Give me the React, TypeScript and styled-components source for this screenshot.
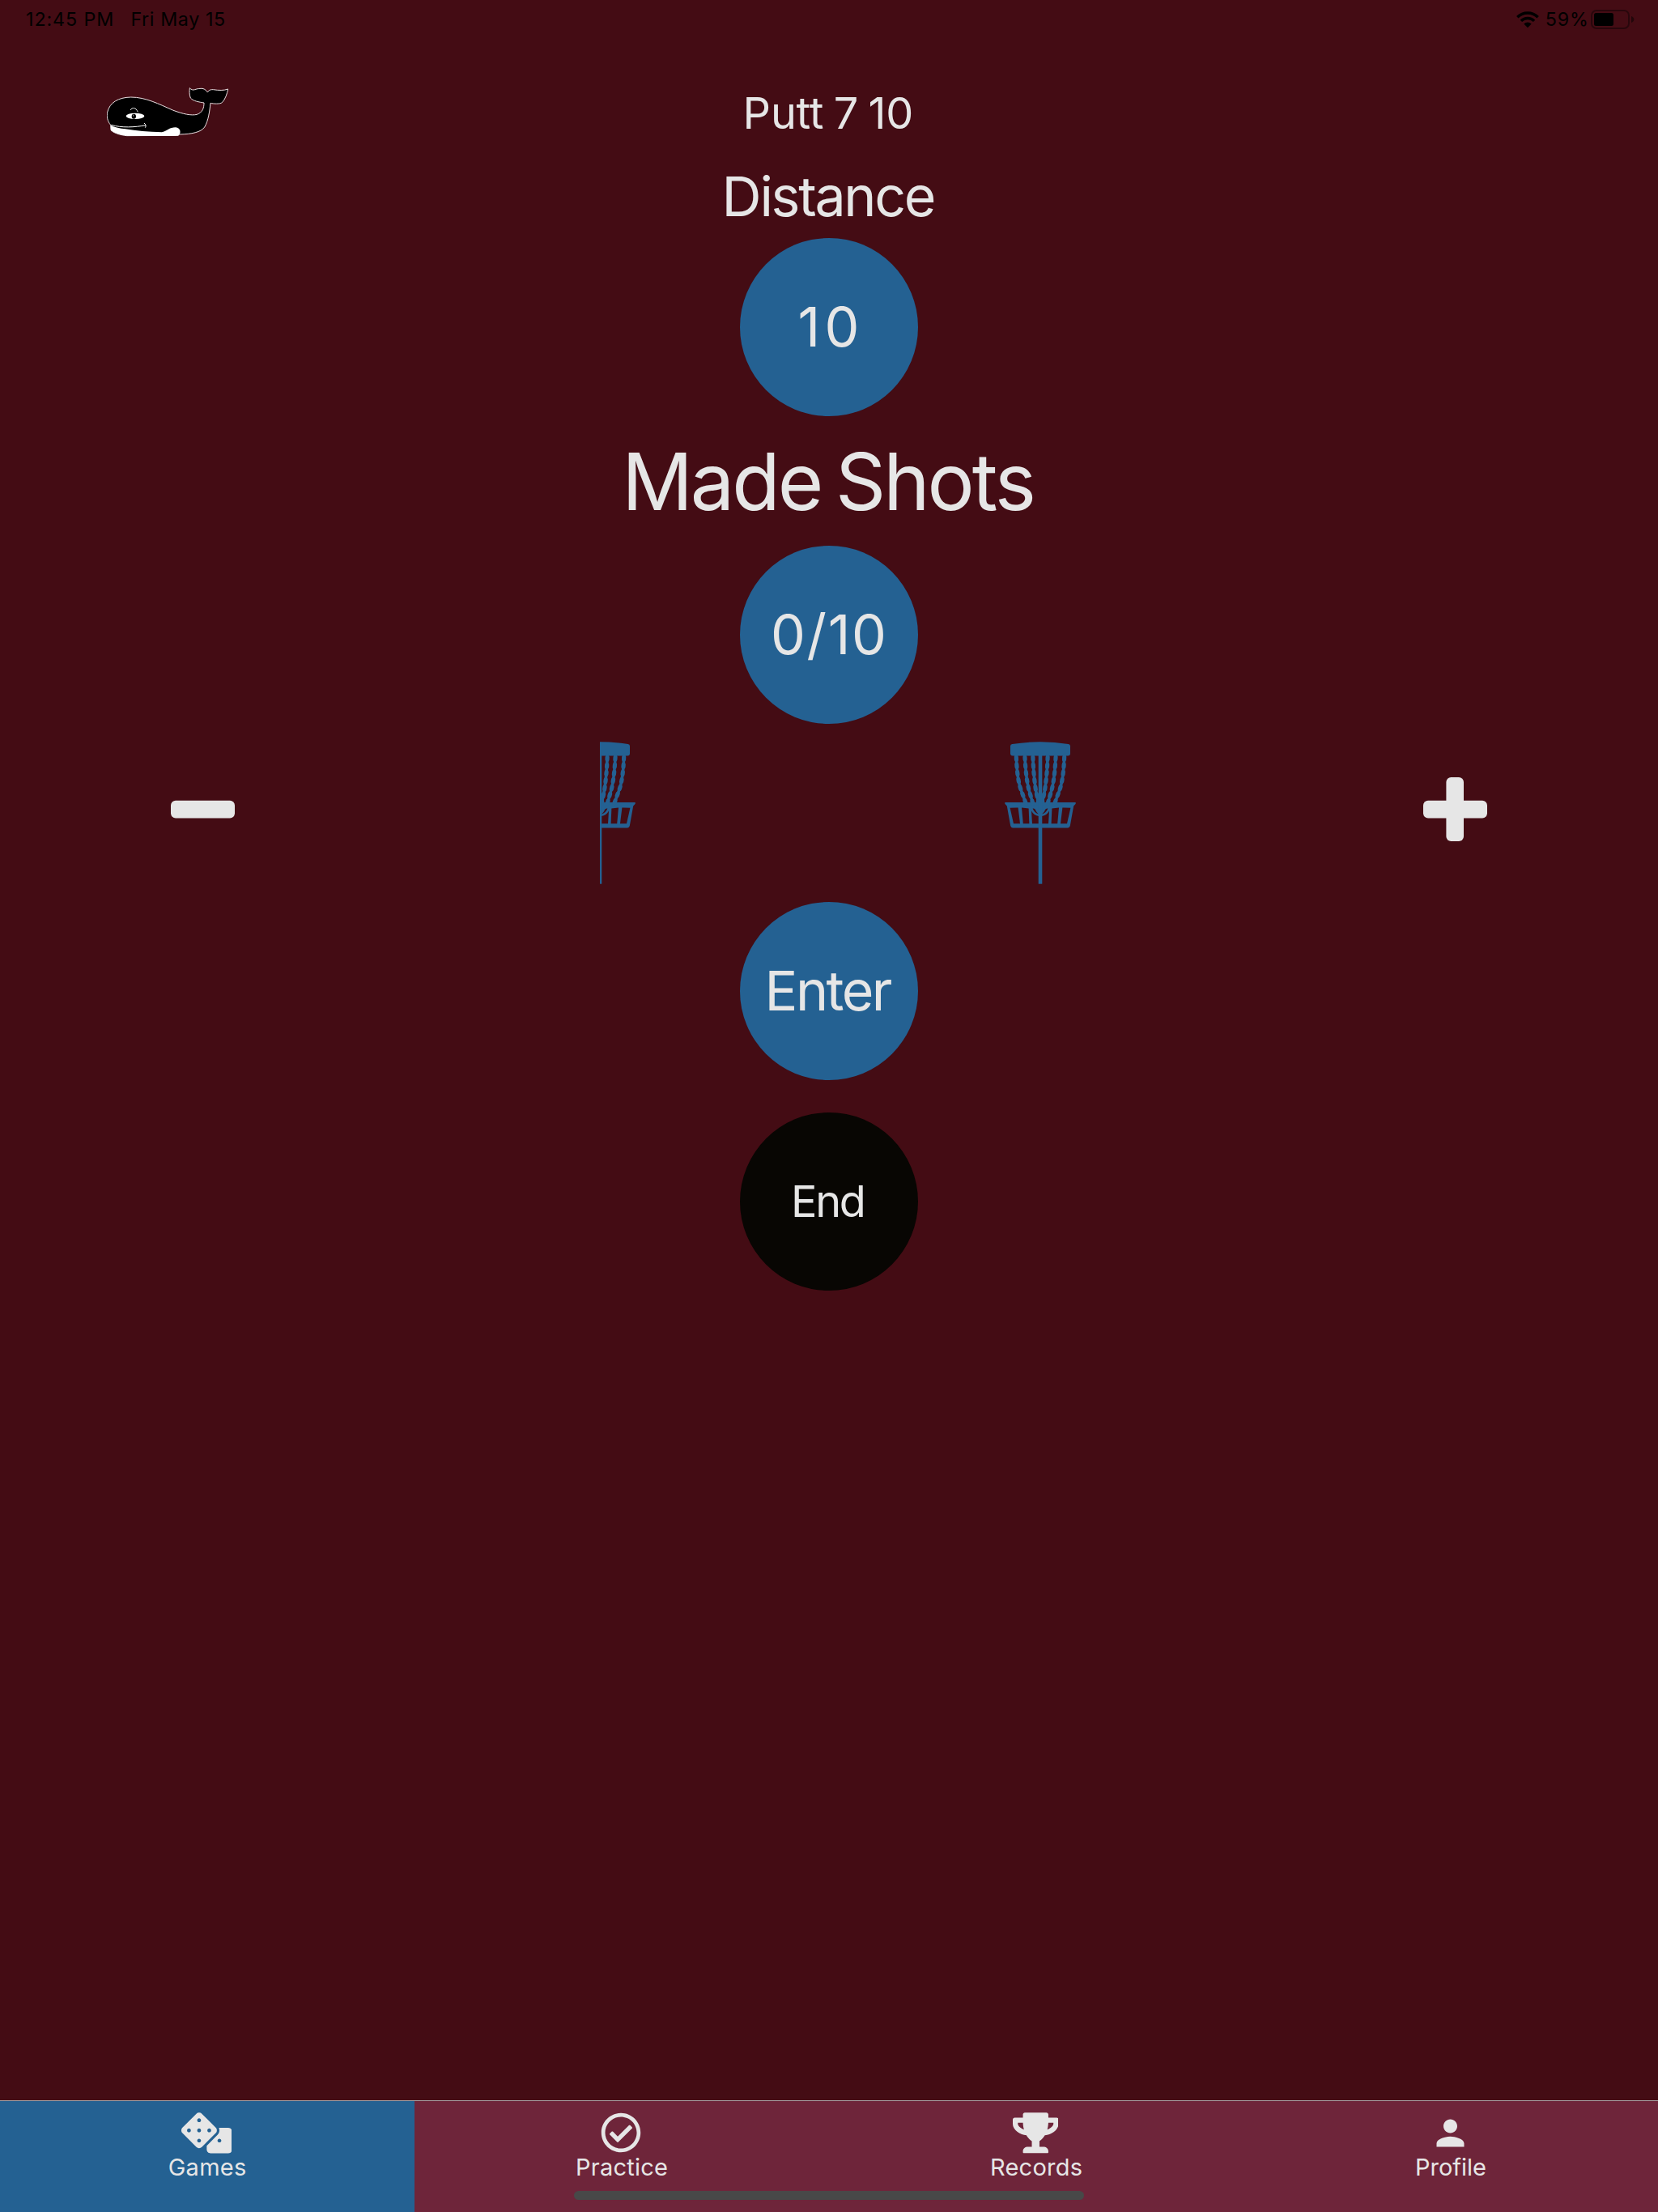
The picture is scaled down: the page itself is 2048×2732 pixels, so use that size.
import React from "react";
import styled, { createGlobalStyle } from "styled-components";
import { FaDice, FaRegCheckCircle, FaTrophy } from "react-icons/fa";
import { MdPerson } from "react-icons/md";

const color = {
  background: "#440c14",
  accent: "#246192",
  bar: "#6e253a",
  light: "#e6e6e6",
  dark: "#080603",
};

const GlobalStyle = createGlobalStyle`
  *, *::before, *::after { box-sizing: border-box; }
  body {
    margin: 0;
    background: ${color.background};
    font-family: Inter, "Liberation Sans", sans-serif;
  }
`;

const Screen = styled.div`
  display: flex;
  flex-direction: column;
  width: 2048px;
  height: 2732px;
  overflow: hidden;
  background: ${color.background};
  color: ${color.light};
`;

const Label = styled.span<{ $size: number; $spacing?: number; $word?: number }>`
  font-size: ${(p) => p.$size}px;
  letter-spacing: ${(p) => p.$spacing ?? 0}px;
  word-spacing: ${(p) => p.$word ?? 0}px;
  margin-right: ${(p) => -(p.$spacing ?? 0)}px;
  white-space: nowrap;
`;

const StatusBar = styled.div`
  display: flex;
  align-items: center;
  justify-content: space-between;
  height: 48px;
  padding: 0 29px 0 32px;
  color: #000;
`;

const StatusGroup = styled.div<{ $gap: number }>`
  display: flex;
  align-items: center;
  gap: ${(p) => p.$gap}px;

  ${Label} {
    line-height: 28px;
    padding-bottom: 1px;
  }
`;

const Header = styled.header`
  display: grid;
  grid-template-columns: 1fr auto 1fr;
  align-items: center;
  height: 184px;
  margin-top: -48px;
  padding: 95px 132px 0;
`;

const Title = styled.h1`
  display: flex;
  margin: 0;
  padding-right: 2px;
  font-weight: 400;
`;

const Main = styled.main`
  display: flex;
  flex: 1;
  flex-direction: column;
  align-items: center;
`;

const Heading = styled.h2<{ $height: number; $top?: number }>`
  display: flex;
  align-items: center;
  height: ${(p) => p.$height}px;
  margin: 0;
  padding-top: ${(p) => p.$top ?? 0}px;
  font-weight: 400;
`;

const Circle = styled.div<{ $fill: string }>`
  display: flex;
  flex: none;
  align-items: center;
  justify-content: center;
  width: 220px;
  height: 220px;
  padding: 0 1px 2px 0;
  border-radius: 50%;
  background: ${(p) => p.$fill};
`;

const Stepper = styled.div`
  display: grid;
  grid-template-columns: 499px 526px 520px 503px;
  place-items: center;
  width: 100%;
  height: 220px;
`;

const StepButton = styled.button`
  display: flex;
  margin: 0 0 9px 2px;
  padding: 0;
  border: 0;
  background: none;
`;

const Actions = styled.div`
  display: flex;
  flex-direction: column;
  gap: 40px;
`;

const TabBar = styled.nav`
  position: relative;
  display: grid;
  grid-template-columns: repeat(4, 1fr);
  height: 138px;
  border-top: 1px solid #a7a0a2;
`;

const Tab = styled.div<{ $active?: boolean }>`
  display: flex;
  flex-direction: column;
  align-items: center;
  padding-top: 13px;
  background: ${(p) => (p.$active ? color.accent : color.bar)};
`;

const TabIcon = styled.div`
  display: flex;
  align-items: center;
  justify-content: center;
  height: 52px;
  margin-right: 2px;
`;

const TabLabel = styled.div`
  display: flex;
  height: 34px;
  font-weight: 380;
  line-height: 34px;
`;

const HomeIndicator = styled.div`
  position: absolute;
  bottom: 15px;
  left: 709px;
  width: 630px;
  height: 11px;
  border-radius: 6px;
  background: #484848;
`;

const WifiSvg = styled.svg`
  margin-right: 5px;
`;

const WifiIcon = () => (
  <WifiSvg width="28" height="21" viewBox="0 0 28 21">
    <g fill="none" stroke="#000" strokeWidth="3.4">
      <path d="M1.3 7.2 A18 18 0 0 1 26.7 7.2" />
      <path d="M5.9 11.9 A11.5 11.5 0 0 1 22.1 11.9" />
    </g>
    <path d="M9.3 15.4 Q14 11.6 18.7 15.4 L14 20.2 Z" />
  </WifiSvg>
);

const BatteryIcon = () => (
  <svg width="54" height="24" viewBox="0 0 54 24">
    <rect x="1" y="1" width="46" height="22" rx="6" fill="none" stroke="#000" strokeOpacity="0.4" strokeWidth="2" />
    <rect x="4" y="4" width="24" height="16" rx="2.5" />
    <path d="M50 8 Q53.4 9.6 53.4 12 Q53.4 14.4 50 16 Z" fillOpacity="0.5" />
  </svg>
);

const WhaleSvg = styled.svg`
  margin-bottom: 3px;
`;

const WhaleLogo = () => (
  <WhaleSvg width="150" height="61" viewBox="36 38 450 183">
    <path
      d="M50 177 C38 163 35 146 38 130 C46 94 78 75 125 74 C180 74 230 100 280 122 C318 137 350 143 370 138 C390 131 396 115 396 95 C378 92 356 89 346 77 C341 65 342 50 343 40 C348 46 355 49 362 46 C372 42 383 42 390 42 C400 44 405 50 409 56 C413 48 422 45 430 46 C450 49 470 50 485 44 C482 60 475 82 463 94 C455 100 432 99 420 96 C417 125 412 162 398 185 C385 204 350 211 305 212 L300 216 L110 217 C82 214 60 206 51 196 Z"
      stroke="#e9dfe1"
      strokeWidth="3"
      strokeLinejoin="round"
    />
    <path
      fill="#fff"
      d="M50 178 C65 186 85 189 105 192 C145 199 190 203 240 204 C262 198 268 186 290 186 C304 188 310 196 307 208 C304 215 300 217 290 217 L110 217 C85 214 65 208 51 197 Z"
    />
    <path d="M52 177 C90 188 140 186 180 178 M174 170 C181 175 182 181 178 187" fill="none" stroke="#fff" strokeWidth="3" />
    <ellipse cx="141" cy="144" rx="34" ry="11" fill="#fff" />
    <ellipse cx="136" cy="145" rx="8" ry="9" />
    <path d="M134 139 V145" stroke="#fff" strokeWidth="2" />
    <path d="M123 122 C130 111 143 111 151 129" fill="none" stroke="#eee" strokeWidth="3" />
  </WhaleSvg>
);

const chains = [
  "M14.2 16 C14.8 34 16.5 50 20.3 60 L26.5 77",
  "M24.8 16 C25.5 32 27 48 29.8 59 L35 77",
  "M34.8 16 C35.2 32 36.5 48 38.8 62 L42 77",
];

const BasketSide = () => (
  <>
    {chains.map((d) => (
      <g key={d} fill="none" stroke={color.accent}>
        <path d={d} strokeWidth="3.6" />
        <path d={d} strokeWidth="5.2" strokeLinecap="round" strokeDasharray="3 6.2" strokeDashoffset="-3" />
      </g>
    ))}
    <g fill={color.background}>
      <path d="M6.6 81.8 L16.6 81.4 L19 101.2 H11 Z" />
      <path d="M21 81.6 L29.6 82.4 L30.4 101.2 H22.8 Z" />
      <path d="M33 85.5 C35 89 38 91.6 42 92 V101.2 H34 Z" />
      <path d="M34.6 82.6 C36.4 82.2 38 83.6 38.6 85.4 C39.4 87.2 41 88.4 42 89.4 C38.4 88.6 36 86 34.6 82.6 Z" />
    </g>
  </>
);

const BasketSvg = styled.svg<{ $half: boolean }>`
  margin-left: ${(p) => (p.$half ? 2 : 0)}px;
`;

const BasketIcon = ({ half = false }: { half?: boolean }) => (
  <BasketSvg $half={half} width={half ? 44 : 88} height="176" viewBox={half ? "44 0 44 176" : "0 0 88 176"}>
    <path
      fill={color.accent}
      d="M7 5.5 Q7 3.4 9.4 3 Q26 0.3 44 0.3 Q62 0.3 78.6 3 Q81 3.4 81 5.5 V14.5 Q81 17.5 78 17.5 H10 Q7 17.5 7 14.5 Z"
    />
    <path fill={color.accent} d="M0.3 75 H87.7 V76.8 L85.2 79.5 L80.8 104 Q80.2 106.4 78 106.4 H10 Q7.8 106.4 7.2 104 L2.8 79.5 L0.3 76.8 Z" />
    <BasketSide />
    <g transform="translate(88 0) scale(-1 1)">
      <BasketSide />
    </g>
    <rect x="41.7" y="16" width="4.6" height="159.7" fill={color.accent} />
  </BasketSvg>
);

const MinusIcon = () => (
  <svg width="79" height="79" viewBox="0 0 79 79" fill={color.light}>
    <rect y="28.8" width="79" height="21.6" rx="6" />
  </svg>
);

const PlusIcon = () => (
  <svg width="79" height="79" viewBox="0 0 79 79" fill={color.light}>
    <rect y="28.8" width="79" height="21.6" rx="6" />
    <rect x="28.4" width="21.6" height="79" rx="6" />
  </svg>
);

const tabs = [
  { name: "Games", icon: <FaDice size={62.7} />, spacing: 0.25, active: true },
  { name: "Practice", icon: <FaRegCheckCircle size={50} />, spacing: 0.25 },
  { name: "Records", icon: <FaTrophy size={56.5} />, spacing: 0.25 },
  { name: "Profile", icon: <MdPerson size={51} />, spacing: 0 },
];

export default function App() {
  return (
    <Screen>
      <GlobalStyle />
      <StatusBar>
        <StatusGroup $gap={21}>
          <Label $size={23.3} $spacing={0.9}>12:45 PM</Label>
          <Label $size={23.3} $spacing={0.6}>Fri May 15</Label>
        </StatusGroup>
        <StatusGroup $gap={3}>
          <WifiIcon />
          <Label $size={23.3} $spacing={0.9}>59%</Label>
          <BatteryIcon />
        </StatusGroup>
      </StatusBar>
      <Header>
        <WhaleLogo />
        <Title>
          <Label $size={54} $spacing={-0.2} $word={-2.5}>Putt 7 10</Label>
        </Title>
      </Header>
      <Main>
        <Heading $height={110} $top={6}>
          <Label $size={68} $spacing={-2.3}>Distance</Label>
        </Heading>
        <Circle $fill={color.accent}>
          <Label $size={68} $spacing={5.3}>10</Label>
        </Circle>
        <Heading $height={160}>
          <Label $size={97} $spacing={-2.95} $word={-6.8}>Made Shots</Label>
        </Heading>
        <Circle $fill={color.accent}>
          <Label $size={68} $spacing={1.6}>0/10</Label>
        </Circle>
        <Stepper>
          <StepButton aria-label="Remove made shot"><MinusIcon /></StepButton>
          <BasketIcon half />
          <BasketIcon />
          <StepButton aria-label="Add made shot"><PlusIcon /></StepButton>
        </Stepper>
        <Actions>
          <Circle $fill={color.accent}>
            <Label $size={68} $spacing={-2.5}>Enter</Label>
          </Circle>
          <Circle $fill={color.dark}>
            <Label $size={54} $spacing={-2.3}>End</Label>
          </Circle>
        </Actions>
      </Main>
      <TabBar>
        {tabs.map((tab) => (
          <Tab key={tab.name} $active={tab.active}>
            <TabIcon>{tab.icon}</TabIcon>
            <TabLabel>
              <Label $size={29} $spacing={tab.spacing}>{tab.name}</Label>
            </TabLabel>
          </Tab>
        ))}
        <HomeIndicator />
      </TabBar>
    </Screen>
  );
}
